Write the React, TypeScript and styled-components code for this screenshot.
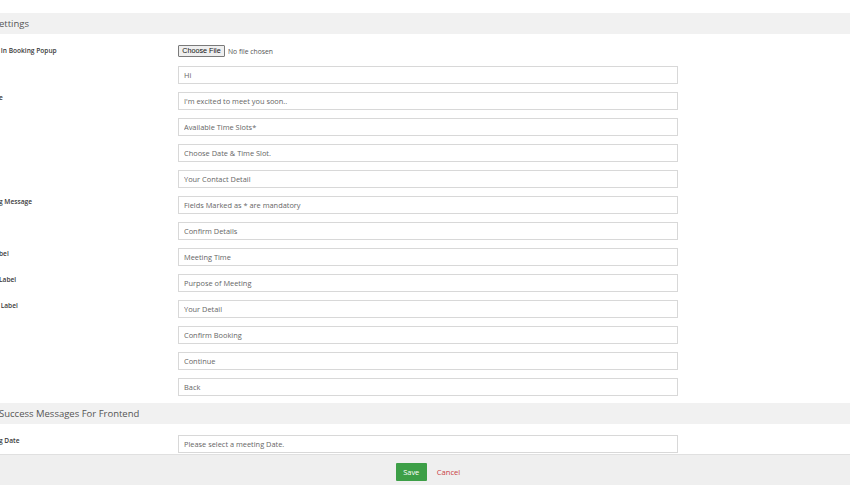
import styled, { createGlobalStyle } from 'styled-components';

const GlobalStyle = createGlobalStyle`
  body {
    margin: 0;
    background: #fff;
    font-family: 'Open Sans', 'DejaVu Sans', sans-serif;
  }
`;

const Page = styled.div`
  width: 850px;
  height: 485px;
  overflow: hidden;
  display: flex;
  flex-direction: column;
  padding-top: 13px;
  box-sizing: border-box;
`;

const SectionHeader = styled.div<{ $top?: number }>`
  height: 21px;
  line-height: 21px;
  margin-top: ${(p) => p.$top || 0}px;
  background: #f1f1f1;
  color: #555;
  font-size: 9.5px;
  white-space: nowrap;
  text-indent: -1px;
`;

const Body = styled.div`
  padding-top: 7px;
`;

const Row = styled.div<{ $file?: boolean; $last?: boolean }>`
  display: flex;
  align-items: flex-start;
  padding: ${(p) => (p.$file ? '4px 0 5px' : p.$last ? '4px 0 1px' : '4px 0')};
`;

const Label = styled.div`
  width: 178px;
  flex-shrink: 0;
  font-size: 6.6px;
  font-weight: 600;
  color: #3a3a3a;
  line-height: 12px;
  white-space: nowrap;
  overflow: hidden;
  text-indent: -1px;
`;

const Field = styled.input`
  width: 500px;
  height: 18px;
  box-sizing: border-box;
  border: 1px solid #d8d8d8;
  border-radius: 0;
  padding: 0 5px;
  margin: 0;
  font-family: 'Open Sans', 'DejaVu Sans', sans-serif;
  font-size: 7.4px;
  color: #666;
  background: #fff;
  outline: none;
`;

const FileWrap = styled.div`
  display: flex;
  align-items: center;
  gap: 3px;
  height: 12px;
`;

const FileButton = styled.button`
  height: 12px;
  width: 47px;
  padding: 0;
  box-sizing: border-box;
  border: 1px solid #7a7a7a;
  border-radius: 1px;
  background: #efefef;
  font-family: 'Liberation Sans', Arial, sans-serif;
  font-size: 7.2px;
  color: #111;
  line-height: 10px;
`;

const FileText = styled.span`
  font-size: 6.8px;
  color: #555;
`;

const Footer = styled.div`
  flex: 1;
  background: #efefef;
  border-top: 1px solid #e0e0e0;
  display: flex;
  justify-content: center;
  align-items: flex-start;
  padding-top: 8px;
  padding-left: 6px;
  gap: 10px;
`;

const SaveButton = styled.button`
  width: 31px;
  height: 18px;
  background: #3d9f47;
  border: none;
  border-radius: 1px;
  color: #fff;
  font-family: 'Open Sans', 'DejaVu Sans', sans-serif;
  font-size: 7.4px;
  padding: 0;
`;

const CancelLink = styled.span`
  color: #c9403f;
  font-size: 7.6px;
  line-height: 18px;
`;

const rows: { label: string; value: string }[] = [
  { label: '', value: 'Hi' },
  { label: 'e', value: "I'm excited to meet you soon.." },
  { label: '', value: 'Available Time Slots*' },
  { label: '', value: 'Choose Date & Time Slot.' },
  { label: '', value: 'Your Contact Detail' },
  { label: 'g Message', value: 'Fields Marked as * are mandatory' },
  { label: '', value: 'Confirm Details' },
  { label: 'bel', value: 'Meeting Time' },
  { label: 'Label', value: 'Purpose of Meeting' },
  { label: '\u00a0Label', value: 'Your Detail' },
  { label: '', value: 'Confirm Booking' },
  { label: '', value: 'Continue' },
  { label: '', value: 'Back' },
];

const App = () => {
  return (
    <Page>
      <GlobalStyle />
      <SectionHeader>ettings</SectionHeader>
      <Body>
        <Row $file>
          <Label>&nbsp;In Booking Popup</Label>
          <FileWrap>
            <FileButton>Choose File</FileButton>
            <FileText>No file chosen</FileText>
          </FileWrap>
        </Row>
        {rows.map((row, idx) => (
          <Row key={idx}>
            <Label>{row.label}</Label>
            <Field defaultValue={row.value} />
          </Row>
        ))}
      </Body>
      <SectionHeader $top={3}>Success Messages For Frontend</SectionHeader>
      <Body>
        <Row $last>
          <Label>g Date</Label>
          <Field defaultValue="Please select a meeting Date." />
        </Row>
      </Body>
      <Footer>
        <SaveButton>Save</SaveButton>
        <CancelLink>Cancel</CancelLink>
      </Footer>
    </Page>
  );
};

export default App;
